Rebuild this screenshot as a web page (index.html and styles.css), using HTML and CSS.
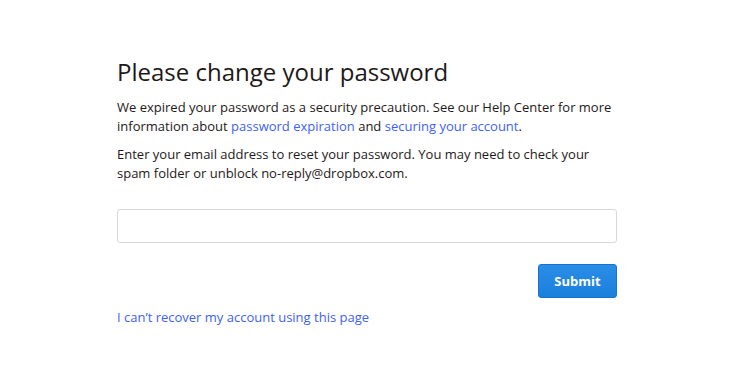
FILE: index.html
```html
<!DOCTYPE html>
<html>
<head>
<meta charset="utf-8">
<link rel="stylesheet" href="styles.css">
</head>
<body>
<main class="page">
  <h1 class="title">Please change your password</h1>
  <p class="text">We expired your password as a security precaution. See our Help Center for more information about <a class="link" href="#">password expiration</a> and <a class="link" href="#">securing your account</a>.</p>
  <p class="text">Enter your email address to reset your password. You may need to check your spam folder or unblock no-reply@dropbox.com.</p>
  <form class="form">
    <input class="field" type="text">
    <div class="actions"><button class="submit" type="button">Submit</button></div>
  </form>
  <a class="link recover" href="#">I can’t recover my account using this page</a>
</main>
</body>
</html>
```

FILE: styles.css
```css
html, body {
  margin: 0;
  padding: 0;
  background: #fff;
}
body {
  font-family: "Open Sans", "Noto Sans", sans-serif;
  color: #1e1919;
}
.page {
  width: 500px;
  margin: 0 0 0 117px;
  padding-top: 56px;
}
.title {
  font-size: 24px;
  font-weight: 400;
  margin: 0 0 10px;
  line-height: 32px;
  color: #1e1919;
}
.text {
  font-size: 13px;
  line-height: 19px;
  margin: 0 0 9px;
}
.link {
  color: #3d62f5;
  text-decoration: none;
}
.form {
  margin-top: 26px;
}
.field {
  display: block;
  box-sizing: border-box;
  width: 500px;
  height: 34px;
  border: 1px solid #d8d8d8;
  border-radius: 3px;
  margin: 0;
}
.actions {
  display: flex;
  justify-content: flex-end;
  margin-top: 21px;
}
.submit {
  width: 79px;
  height: 34px;
  border: 1px solid #1673d0;
  border-radius: 3px;
  background: linear-gradient(#2a8ee8, #1a7fdc);
  color: #fff;
  font-family: "Open Sans", sans-serif;
  font-size: 13px;
  font-weight: 700;
}
.recover {
  display: block;
  margin-top: 10px;
  font-size: 13px;
  line-height: 19px;
}
```
